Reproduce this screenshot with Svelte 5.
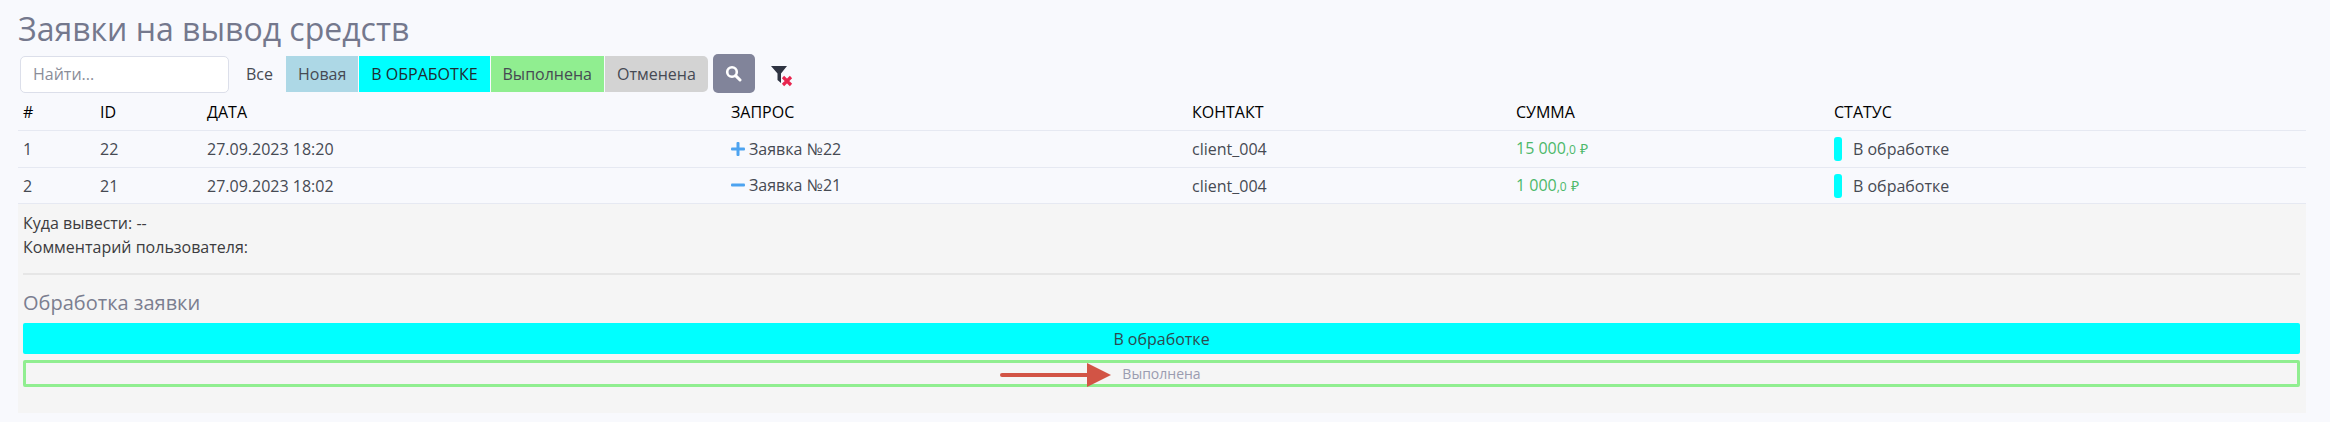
<script>
  const statuses = [
    { label: 'Новая', cls: 'new' },
    { label: 'В ОБРАБОТКЕ', cls: 'work' },
    { label: 'Выполнена', cls: 'done' },
    { label: 'Отменена', cls: 'cancel' }
  ];

  const rows = [
    { n: 1, id: 22, date: '27.09.2023 18:20', open: false, sum: '15 000', contact: 'client_004' },
    { n: 2, id: 21, date: '27.09.2023 18:02', open: true, sum: '1 000', contact: 'client_004' }
  ];
</script>

<div class="page">
  <h1>Заявки на вывод средств</h1>

  <div class="filters">
    <input class="search" placeholder="Найти..." />
    <span class="all">Все</span>
    <div class="tabs">
      {#each statuses as s}
        <span class="tab {s.cls}">{s.label}</span>
      {/each}
    </div>
    <button class="search-btn" aria-label="Поиск">
      <svg width="17" height="17" viewBox="0 0 17 17">
        <circle cx="7" cy="7" r="4.8" fill="none" stroke="#fff" stroke-width="2.6" />
        <path d="M10.6 10.6 L15 15" stroke="#fff" stroke-width="3" stroke-linecap="round" />
      </svg>
    </button>
    <svg class="clear" width="24" height="24" viewBox="0 0 24 24" aria-label="Сбросить">
      <path d="M1 3 H17 L11 10.5 V20 L7.5 17 V10.5 Z" fill="#2f3442" />
      <path d="M13 14 L21 22 M21 14 L13 22" stroke="#e8264f" stroke-width="3.2" />
    </svg>
  </div>

  <table>
    <thead>
      <tr>
        <th class="c-n">#</th>
        <th class="c-id">ID</th>
        <th class="c-date">ДАТА</th>
        <th class="c-req">ЗАПРОС</th>
        <th class="c-contact">КОНТАКТ</th>
        <th class="c-sum">СУММА</th>
        <th>СТАТУС</th>
      </tr>
    </thead>
    <tbody>
      {#each rows as r}
        <tr>
          <td>{r.n}</td>
          <td>{r.id}</td>
          <td>{r.date}</td>
          <td>
            <span class="req">
              <svg width="14" height="14" viewBox="0 0 14 14">
                {#if !r.open}<rect x="5.5" y="0" width="3" height="14" rx="1" fill="#4da3f0" />{/if}
                <rect x="0" y="5.5" width="14" height="3" rx="1" fill="#4da3f0" />
              </svg>
              Заявка №{r.id}
            </span>
          </td>
          <td>{r.contact}</td>
          <td class="sum">{r.sum}<small>,0</small> <span class="rub">₽</span></td>
          <td><span class="status"><i></i>В обработке</span></td>
        </tr>
      {/each}
    </tbody>
  </table>

  <section class="detail">
    <p>Куда вывести: --</p>
    <p>Комментарий пользователя:</p>
    <hr />
    <h4>Обработка заявки</h4>
    <button class="act current">В обработке</button>
    <button class="act next">
      <svg class="arrow" width="111" height="24" viewBox="0 0 111 24">
        <path d="M2 12 H90" stroke="#d25445" stroke-width="4" stroke-linecap="round" />
        <path d="M87 0 L111 12 L87 24 Z" fill="#d25445" />
      </svg>
      Выполнена
    </button>
  </section>
</div>

<style>
  :global(body) {
    background: #f8f9fd;
  }

  .page {
    height: 422px;
    box-sizing: border-box;
    padding: 7px 24px 0 18px;
    font-family: 'Open Sans', sans-serif;
    font-size: 16px;
    color: #464a53;
    overflow: hidden;
  }

  h1 {
    margin: 0;
    font-size: 32px;
    line-height: 44px;
    font-weight: 400;
    color: #74788d;
  }

  .filters {
    display: flex;
    align-items: center;
    height: 39px;
    margin-top: 3px;
    padding-left: 2px;
  }

  .search {
    width: 209px;
    height: 37px;
    margin-top: 1px;
    box-sizing: border-box;
    border: 1px solid #dcdfea;
    border-radius: 5px;
    background: #fff;
    padding: 0 12px;
    font: inherit;
  }

  .search::placeholder {
    color: #8a8d99;
  }

  .all {
    margin-left: 17px;
    width: 40px;
  }

  .tabs {
    display: flex;
    height: 36px;
    margin-top: 1px;
  }

  .tab {
    display: flex;
    align-items: center;
    padding: 0 12px;
    border-right: 1px solid #f8f9fd;
  }

  .new { background: #add8e6; }
  .work { background: #00ffff; font-weight: 500; color: #1f2d33; }
  .done { background: #90ee90; }
  .cancel { background: #d3d3d3; border-right: 0; border-radius: 0 5px 5px 0; }

  .search-btn {
    width: 42px;
    height: 39px;
    margin-left: 5px;
    border: 0;
    border-radius: 5px;
    background: #81849a;
    display: flex;
    align-items: center;
    justify-content: center;
    padding: 0;
  }

  .clear {
    margin-left: 15px;
    margin-top: 3px;
  }

  table {
    width: 100%;
    margin-top: 1px;
    border-collapse: separate;
    border-spacing: 0;
    table-layout: fixed;
  }

  th, td {
    padding: 0 5px;
    text-align: left;
    border-bottom: 1px solid #e6e9f2;
    box-sizing: border-box;
  }

  th {
    height: 37px;
    font-weight: 500;
    color: #000;
  }

  td {
    height: 37px;
    line-height: 24px;
  }

  tbody tr:last-child td {
    height: 36px;
  }

  .c-n { width: 77px; }
  .c-id { width: 107px; }
  .c-date { width: 524px; }
  .c-req { width: 461px; }
  .c-contact { width: 324px; }
  .c-sum { width: 318px; }

  .req {
    display: inline-flex;
    align-items: center;
    gap: 4px;
  }

  .sum {
    color: #4cb86a;
  }

  .sum small {
    font-size: 12px;
  }

  .rub {
    font-size: 14px;
  }

  .status {
    display: flex;
    align-items: center;
    gap: 11px;
  }

  .status i {
    width: 8px;
    height: 24px;
    border-radius: 3px;
    background: #00ffff;
  }

  .detail {
    background: #f5f5f5;
    padding: 7px 6px 0 5px;
    height: 209px;
    box-sizing: border-box;
  }

  .detail p {
    margin: 0;
    line-height: 24px;
    color: #3c3c40;
  }

  hr {
    margin: 14px 0 0;
    border: 0;
    border-top: 2px solid #e6e6e6;
  }

  h4 {
    margin: 14px 0 0;
    font-size: 20px;
    line-height: 28px;
    font-weight: 400;
    color: #7b7e90;
  }

  .act {
    display: block;
    width: 100%;
    font-family: inherit;
    box-sizing: border-box;
    border-radius: 2px;
    padding: 0;
    position: relative;
  }

  .current {
    height: 31px;
    margin-top: 6px;
    border: 0;
    background: #00ffff;
    font-size: 16px;
    color: #2d4a50;
  }

  .next {
    height: 27px;
    margin-top: 6px;
    border: 3px solid #90ee90;
    background: transparent;
    font-size: 14px;
    color: #9a9cb0;
  }

  .arrow {
    position: absolute;
    left: 974px;
    top: 0;
  }
</style>
